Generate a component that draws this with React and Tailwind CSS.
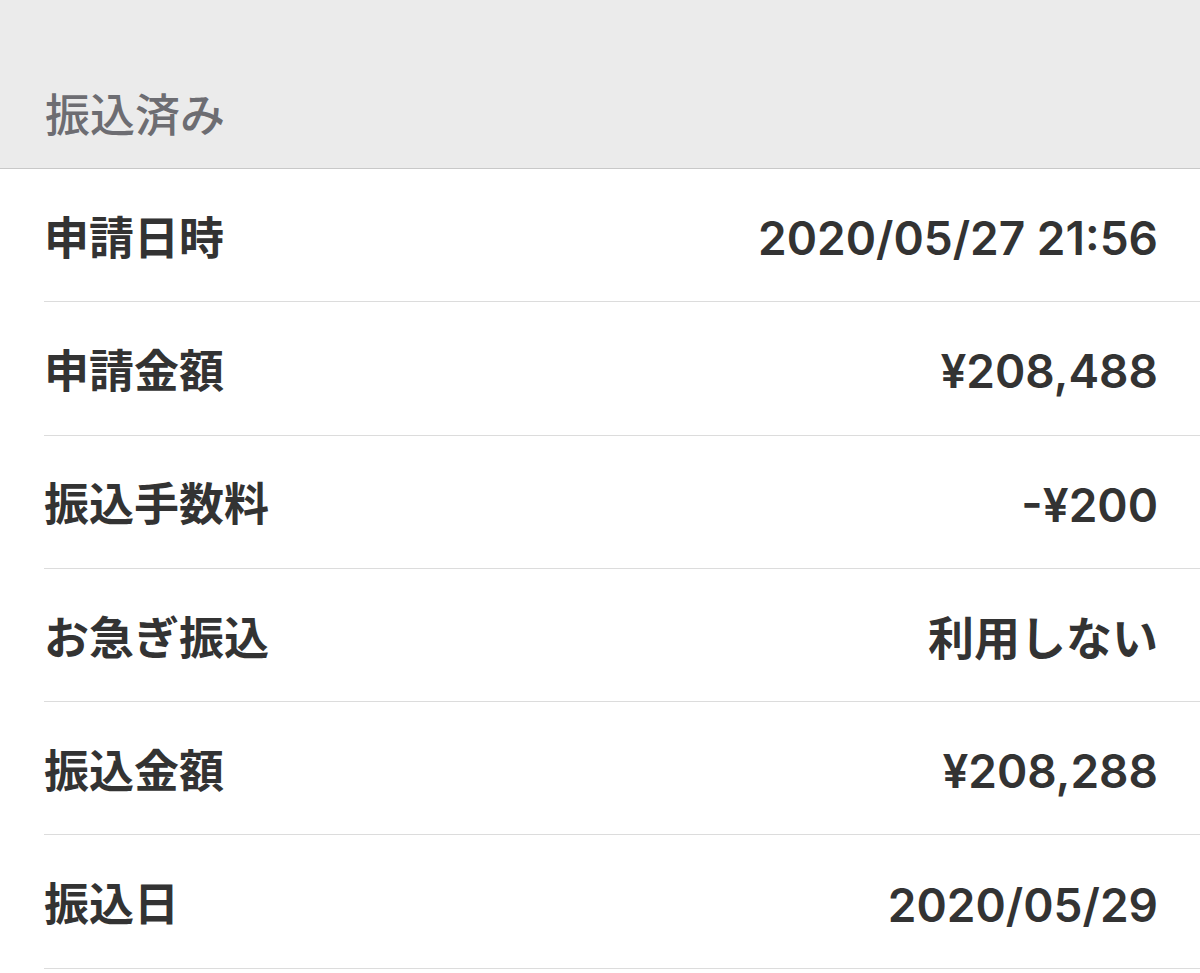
const rows = [
  { label: '申請日時', value: '2020/05/27 21:56' },
  { label: '申請金額', value: '¥208,488' },
  { label: '振込手数料', value: '-¥200' },
  { label: 'お急ぎ振込', value: '利用しない' },
  { label: '振込金額', value: '¥208,288' },
  { label: '振込日', value: '2020/05/29' },
]

export default function App() {
  return (
    <div className="min-h-[973px] bg-white" style={{ fontFamily: '"Noto Sans CJK JP", "Noto Sans", sans-serif' }}>
      {/* Section header */}
      <div className="h-[169px] bg-[#ebebeb] border-b border-[#c8c8c8] flex items-end pb-[33px] pl-[45px]">
        <h2 className="text-[45px] leading-none text-[#6d6d72] font-medium">振込済み</h2>
      </div>

      <div className="pl-[44px]">
        {rows.map(r => (
          <div key={r.label} className="h-[133.3px] border-b border-[#dcdcdc] flex items-center justify-between pr-[42px]">
            <span className="text-[45px] leading-none font-bold text-[#333]">{r.label}</span>
            <span className="text-[46px] leading-none font-semibold text-[#333] mt-[6px] font-['Inter','Noto_Sans_CJK_JP',sans-serif]">{r.value}</span>
          </div>
        ))}
      </div>
    </div>
  )
}
